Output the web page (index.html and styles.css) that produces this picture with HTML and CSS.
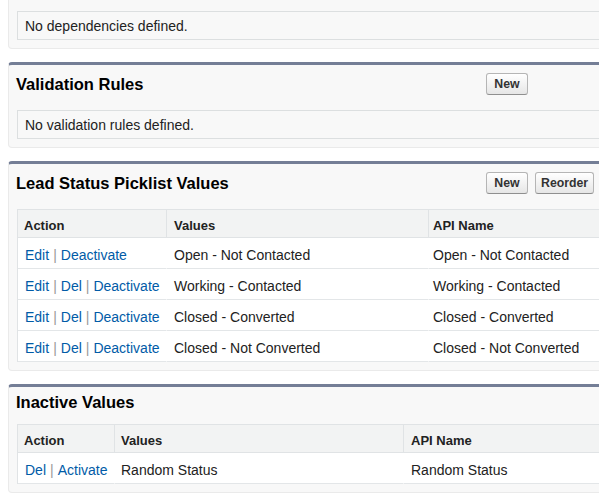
FILE: index.html
```html
<!DOCTYPE html>
<html lang="en">
<head>
<meta charset="utf-8">
<title>Lead Status</title>
<link rel="stylesheet" href="styles.css">
</head>
<body>
<div class="page">
  <section class="block block-cut">
    <div class="empty">No dependencies defined.</div>
  </section>

  <section class="block">
    <div class="block-head">
      <h2 class="block-title">Validation Rules</h2>
      <div class="btns"><button class="btn">New</button></div>
    </div>
    <div class="empty">No validation rules defined.</div>
  </section>

  <section class="block">
    <div class="block-head">
      <h2 class="block-title">Lead Status Picklist Values</h2>
      <div class="btns"><button class="btn">New</button><button class="btn">Reorder</button></div>
    </div>
    <table class="list">
      <thead>
        <tr>
          <th class="a1">Action</th>
          <th class="a2">Values</th>
          <th class="a3">API Name</th>
        </tr>
      </thead>
      <tbody>
        <tr>
          <td class="a1"><a href="#">Edit</a><span class="sep">|</span><a href="#">Deactivate</a></td>
          <td class="a2">Open - Not Contacted</td>
          <td class="a3">Open - Not Contacted</td>
        </tr>
        <tr>
          <td class="a1"><a href="#">Edit</a><span class="sep">|</span><a href="#">Del</a><span class="sep">|</span><a href="#">Deactivate</a></td>
          <td class="a2">Working - Contacted</td>
          <td class="a3">Working - Contacted</td>
        </tr>
        <tr>
          <td class="a1"><a href="#">Edit</a><span class="sep">|</span><a href="#">Del</a><span class="sep">|</span><a href="#">Deactivate</a></td>
          <td class="a2">Closed - Converted</td>
          <td class="a3">Closed - Converted</td>
        </tr>
        <tr>
          <td class="a1"><a href="#">Edit</a><span class="sep">|</span><a href="#">Del</a><span class="sep">|</span><a href="#">Deactivate</a></td>
          <td class="a2">Closed - Not Converted</td>
          <td class="a3">Closed - Not Converted</td>
        </tr>
      </tbody>
    </table>
  </section>

  <section class="block">
    <div class="block-head">
      <h2 class="block-title">Inactive Values</h2>
    </div>
    <table class="list">
      <thead>
        <tr>
          <th class="b1">Action</th>
          <th class="b2">Values</th>
          <th class="b3">API Name</th>
        </tr>
      </thead>
      <tbody>
        <tr>
          <td class="b1"><a href="#">Del</a><span class="sep">|</span><a href="#">Activate</a></td>
          <td class="b2">Random Status</td>
          <td class="b3">Random Status</td>
        </tr>
      </tbody>
    </table>
  </section>
</div>
</body>
</html>
```

FILE: styles.css
```css
* { box-sizing: border-box; }

html, body {
  margin: 0;
  padding: 0;
  overflow: hidden;
  background: #ffffff;
}

body {
  font-family: "Liberation Sans", Arial, sans-serif;
  font-size: 14px;
  color: #222;
}

.page {
  padding-left: 8px;
  width: 760px;
}

.block {
  width: 740px;
  background: #f8f8f8;
  border: 1px solid #eaeaea;
  border-top: 3px solid #747e96;
  border-radius: 4px;
  padding: 0 0 8px 8px;
  margin-top: 13px;
}

.block-cut {
  margin-top: 0;
  border-top: none;
  border-radius: 0 0 4px 4px;
  padding-top: 11px;
}

.block-head {
  display: flex;
  align-items: center;
  padding: 5px 0 12px 0;
  margin-left: -1px;
}

.block-title {
  flex: 0 0 470px;
  margin: 0;
  font-size: 16.5px;
  line-height: 20px;
  font-weight: bold;
  color: #000;
}

.btns {
  display: flex;
  gap: 7px;
  margin: 3px 0;
}

.btn {
  height: 22px;
  min-width: 42px;
  padding: 0 5px;
  font-family: "Liberation Sans", Arial, sans-serif;
  font-size: 12.3px;
  font-weight: bold;
  color: #333;
  background: linear-gradient(#ffffff, #e6e6e6);
  border: 1px solid #b5b5b5;
  border-bottom-color: #8f8f8f;
  border-radius: 3px;
}

.empty {
  height: 29px;
  border: 1px solid #dcdfe0;
  padding: 6px 7px 4px;
  line-height: 17px;
  color: #222;
}

.list {
  width: 100%;
  table-layout: fixed;
  border-collapse: separate;
  border-spacing: 0;
  border: 1px solid #e0e3e5;
  border-bottom: none;
  background: #ffffff;
}

.list th {
  background: #f2f3f3;
  font-size: 13px;
  line-height: 15px;
  font-weight: bold;
  text-align: left;
  color: #222;
  height: 28px;
  padding: 8px 6px 4px;
  border-bottom: 1px solid #e0e3e5;
}

.list th + th {
  border-left: 1px solid #e0e3e5;
}

.list td {
  height: 31px;
  padding: 9px 6px 5px;
  line-height: 16px;
  border-bottom: 1px solid #e3e6e8;
  white-space: nowrap;
  color: #222;
}

.list td + td {
  border-left: 1px solid transparent;
}

.a1 { width: 148px; }
.a2 { width: 262px; padding-left: 7px !important; }
.a3 { padding-left: 4px !important; }

.b1 { width: 96px; }
.b2 { width: 289px; padding-left: 6px !important; }
.b3 { padding-left: 7px !important; }

td.a1, td.b1 { padding-left: 7px; }

.list a {
  color: #015ba7;
  text-decoration: none;
}

.sep {
  color: #999;
  margin: 0 4px;
}
```
